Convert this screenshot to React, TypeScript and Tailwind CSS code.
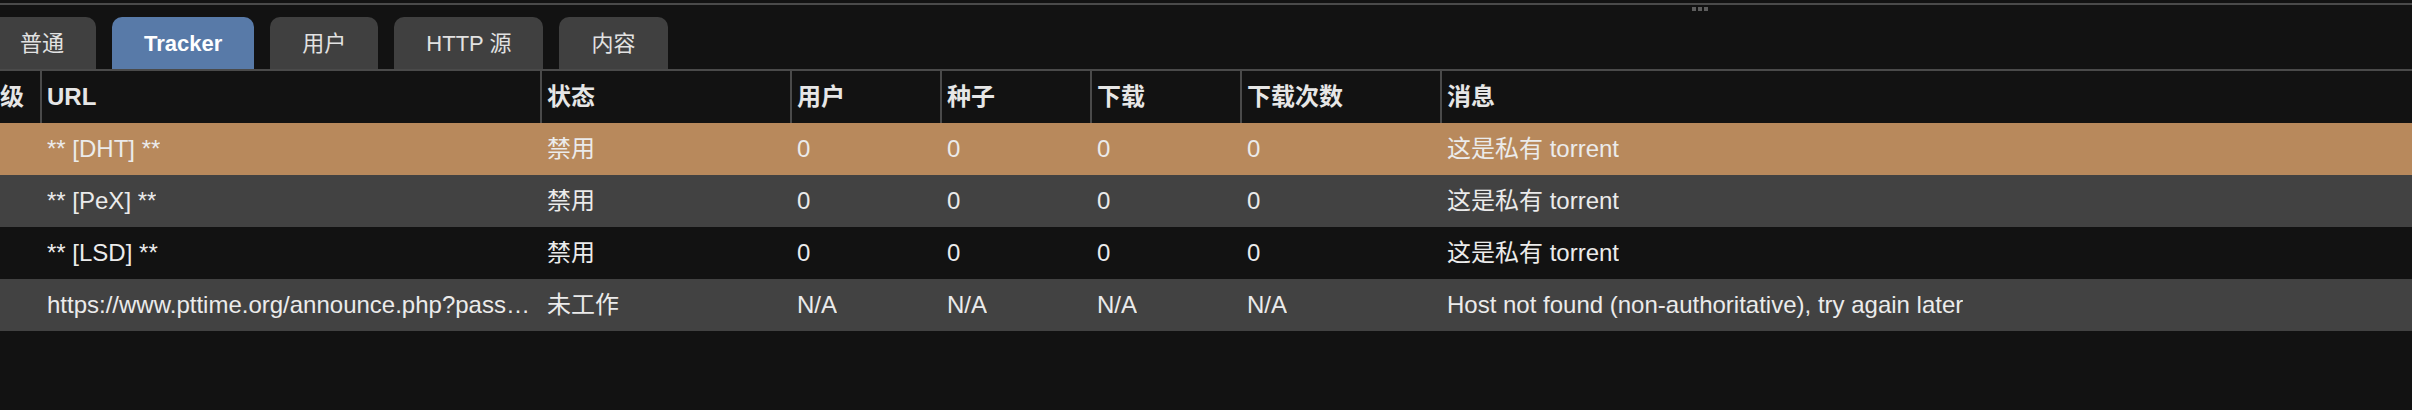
import React from "react";

const tabs = [
  { label: "普通", active: false },
  { label: "Tracker", active: true },
  { label: "用户", active: false },
  { label: "HTTP 源", active: false },
  { label: "内容", active: false },
];

const headers = ["级", "URL", "状态", "用户", "种子", "下载", "下载次数", "消息"];

const rows = [
  { bg: "bg-[#b8895c]", cells: ["", "** [DHT] **", "禁用", "0", "0", "0", "0", "这是私有 torrent"] },
  { bg: "bg-[#424242]", cells: ["", "** [PeX] **", "禁用", "0", "0", "0", "0", "这是私有 torrent"] },
  { bg: "bg-[#121212]", cells: ["", "** [LSD] **", "禁用", "0", "0", "0", "0", "这是私有 torrent"] },
  {
    bg: "bg-[#424242]",
    cells: [
      "",
      "https://www.pttime.org/announce.php?pass…",
      "未工作",
      "N/A",
      "N/A",
      "N/A",
      "N/A",
      "Host not found (non-authoritative), try again later",
    ],
  },
];

const grid = "grid grid-cols-[40px_500px_250px_150px_150px_150px_200px_1fr]";

export default function App() {
  return (
    <div
      className="relative w-[2412px] h-[410px] overflow-hidden bg-[#121212] text-[#e6e6e6]"
      style={{ fontFamily: '"Liberation Sans", "Noto Sans CJK SC", sans-serif' }}
    >
      <div className="h-[3px]" />
      <div className="h-[2px] bg-[#4a4a4a]" />
      <div className="absolute left-[1692px] top-[7px] flex gap-[2px]">
        <div className="w-[4px] h-[4px] bg-[#5c5c5c]" />
        <div className="w-[4px] h-[4px] bg-[#5c5c5c]" />
        <div className="w-[4px] h-[4px] bg-[#5c5c5c]" />
      </div>
      <div className="mt-[12px] flex gap-[16px] ml-[-12px]">
        {tabs.map((t) => (
          <div
            key={t.label}
            className={
              t.active
                ? "h-[52px] px-[32px] flex items-center rounded-t-[10px] bg-[#587aa8] text-white font-bold text-[22px] whitespace-nowrap"
                : "h-[52px] px-[32px] flex items-center rounded-t-[10px] bg-[#404040] text-[#e2e2e2] text-[22px] whitespace-nowrap"
            }
          >
            {t.label}
          </div>
        ))}
      </div>
      <div className="h-[2px] bg-[#4a4a4a]" />
      <div>
        <div className={`${grid} h-[52px] items-stretch`}>
          {headers.map((h, i) => (
            <div
              key={h}
              className={
                i === 0
                  ? "flex items-center text-[24px] font-bold text-[#e6e6e6] whitespace-nowrap"
                  : "flex items-center border-l-2 border-[#4a4a4a] pl-[5px] text-[24px] font-bold text-[#e6e6e6] whitespace-nowrap overflow-hidden"
              }
            >
              {h}
            </div>
          ))}
        </div>
        {rows.map((r, ri) => (
          <div key={ri} className={`${grid} h-[52px] ${r.bg}`}>
            {r.cells.map((c, ci) => (
              <div
                key={ci}
                className={
                  ci === 0
                    ? "flex items-center"
                    : "flex items-center border-l-2 border-transparent pl-[5px] pr-[6px] text-[24px] text-[#ebebeb] whitespace-nowrap overflow-hidden"
                }
              >
                {c ? <span className="truncate">{c}</span> : null}
              </div>
            ))}
          </div>
        ))}
      </div>
    </div>
  );
}
